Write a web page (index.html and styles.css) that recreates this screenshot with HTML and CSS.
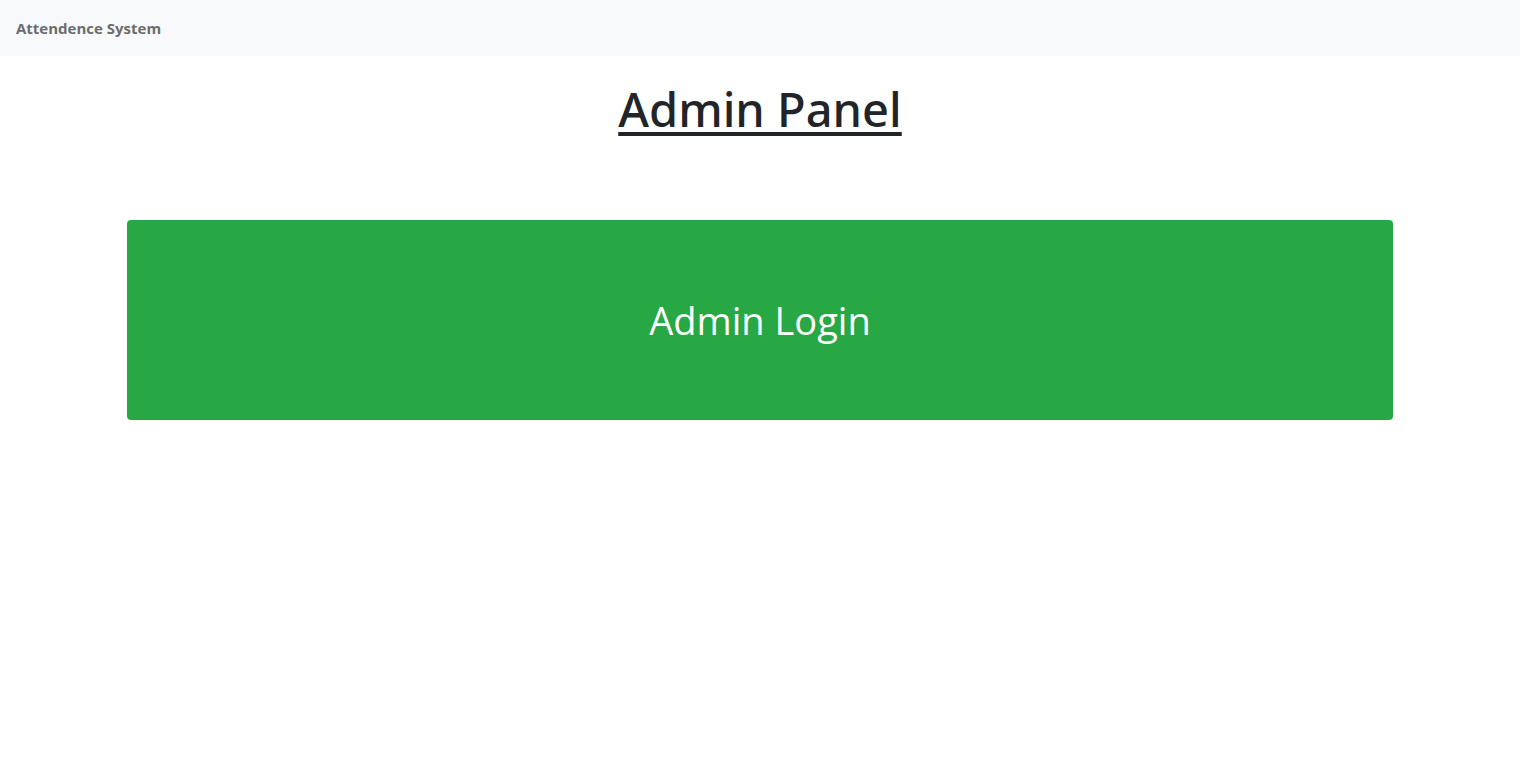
FILE: index.html
```html
<!DOCTYPE html>
<html>
<head>
<meta charset="utf-8">
<link rel="stylesheet" href="styles.css">
</head>
<body>
<nav class="navbar">
  <a class="brand" href="#">Attendence System</a>
</nav>
<main class="main">
  <h1 class="title">Admin Panel</h1>
  <a class="login-btn" href="#">Admin Login</a>
</main>
</body>
</html>
```
FILE: styles.css
```css
html, body {
  margin: 0;
  padding: 0;
  background: #fff;
  font-family: "Open Sans", "Noto Sans", sans-serif;
  color: #212529;
}
.navbar {
  height: 56px;
  background: #f8f9fa;
  display: flex;
  align-items: center;
  padding: 0 16px;
  box-sizing: border-box;
}
.brand {
  font-size: 15px;
  font-weight: 700;
  color: #6c6c6c;
  text-decoration: none;
}
.main {
  display: flex;
  flex-direction: column;
  align-items: center;
  padding: 0 127px;
}
.title {
  margin: 20px 0 0;
  font-family: "Noto Sans", "Open Sans", sans-serif;
  font-size: 47px;
  font-weight: 500;
  line-height: 66px;
  text-decoration: underline;
  text-decoration-thickness: 4px;
  text-underline-offset: 5px;
}
.login-btn {
  margin-top: 78px;
  align-self: stretch;
  height: 200px;
  display: flex;
  align-items: center;
  justify-content: center;
  background: #28a745;
  color: #fff;
  border-radius: 4px;
  font-size: 38px;
  text-decoration: none;
}
```
